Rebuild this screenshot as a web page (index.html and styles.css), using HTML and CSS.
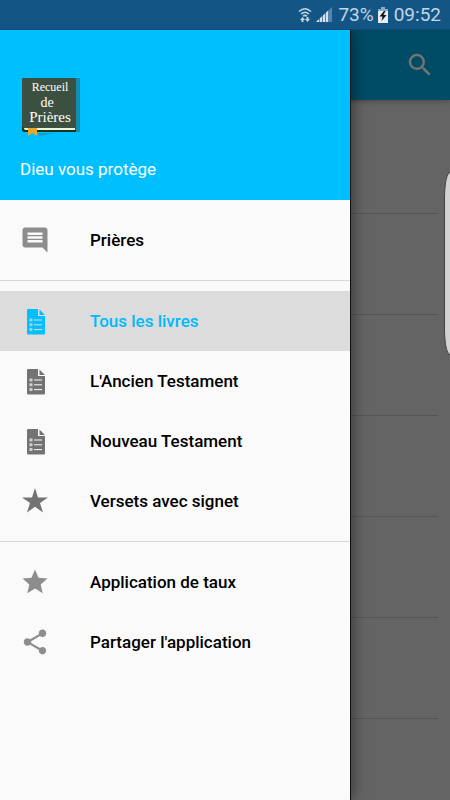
FILE: index.html
```html
<!DOCTYPE html>
<html lang="fr">
<head>
    <meta charset="UTF-8">
    <meta name="viewport" content="width=device-width, initial-scale=1.0">
    <title>Recueil de Prières</title>
    <link rel="stylesheet" href="styles.css">
</head>
<body>
    <div class="status-bar">
        <svg class="wifi" viewBox="0 0 14 18" width="14" height="18">
            <g fill="none" stroke="#c3d6e5" stroke-width="1.5">
                <path d="M1 5.5Q7 0 13 5.5"/>
                <path d="M3 8Q7 4.500 11 8"/>
                <path d="M5 10.300Q7 8.500 9 10.300"/>
            </g>
            <path d="M4.500 11L7 14H5.500V16H3.500V14H2ZM9.500 16L7 13H8.500V11H10.500V13H12Z" fill="#c3d6e5"/>
        </svg>
        <svg class="signal" viewBox="0 0 16 16" width="16" height="16">
            <path d="M0 15L16 0V15Z" fill="#5486ab"/>
            <path d="M0 15L3 12.200V15ZM4 15V11.200L6 9.300V15ZM7 15V8.400L9 6.500V15ZM10 15V5.600L12 3.700V15Z" fill="#d5e2ec"/>
        </svg>
        <span class="battery-level">73%</span>
        <svg class="battery" viewBox="0 0 10 16" width="10" height="16">
            <path d="M3 0H7V2H10V16H0V2H3Z" fill="#8aaac4"/>
            <path d="M0 4H10V16H0Z" fill="#e4edf3"/>
            <path d="M6 4L1.500 9.500H4.500L3.500 14L8.500 8H5.500L7.500 4Z" fill="#111"/>
        </svg>
        <span class="clock">09:52</span>
    </div>

    <div class="screen">
        <main class="page">
            <header class="app-bar">
                <button class="search-btn" type="button" aria-label="Rechercher">
                    <svg viewBox="0 0 24 24" width="30" height="30"><path d="M15.500 14h-.79l-.28-.27A6.471 6.471 0 0 0 16 9.500 6.500 6.500 0 1 0 9.500 16c1.610 0 3.090-.59 4.230-1.570l.27.28v.79l5 4.990L20.490 19l-4.990-5zm-6 0C7.010 14 5 11.990 5 9.500S7.010 5 9.500 5 14 7.010 14 9.500 11.990 14 9.500 14z"/></svg>
                </button>
            </header>
            <ul class="book-list">
                <li></li>
                <li></li>
                <li></li>
                <li></li>
                <li></li>
                <li></li>
            </ul>
        </main>

        <div class="edge-handle"></div>

        <aside class="drawer">
            <div class="drawer-header">
                <svg class="logo" viewBox="0 0 60 60" width="60" height="60">
                    <path d="M56 0H60V54H56Z" fill="#168cae"/>
                    <path d="M18 55H36L19 58Z" fill="#0d9fce"/>
                    <path d="M3 0H56V54H5Q2 54 2 51V1Q2 0 3 0Z" fill="#3b5040"/>
                    <path d="M2 49V51Q2 54 5 54H56V52H5Q3 52 3 49Z" fill="#17351d"/>
                    <path d="M4 50H55V52H5Q4 51 4 50Z" fill="#e9f5df"/>
                    <path d="M8 50H17V58L12.500 55L8 58Z" fill="#e9a72c"/>
                    <g fill="#fff" font-family="Liberation Serif, serif" text-anchor="middle">
                        <text x="30" y="13" font-size="12">Recueil</text>
                        <text x="27" y="29" font-size="14">de</text>
                        <text x="30" y="44" font-size="15">Prières</text>
                    </g>
                </svg>
                <p class="tagline">Dieu vous protège</p>
            </div>

            <nav class="menu">
                <div class="menu-group">
                    <a class="menu-item light" href="#">
                        <svg viewBox="0 0 24 24" width="30" height="30"><path d="M21.990 4c0-1.100-.89-2-1.990-2H4c-1.100 0-2 .9-2 2v12c0 1.100.9 2 2 2h14l4 4-.01-18zM18 14H6v-2h12v2zm0-3H6V9h12v2zm0-3H6V6h12v2z"/></svg>
                        Prières
                    </a>
                </div>
                <div class="menu-group">
                    <a class="menu-item active" href="#">
                        <svg viewBox="0 0 30 30" width="30" height="30"><use href="#doc"/></svg>
                        Tous les livres
                    </a>
                    <a class="menu-item" href="#">
                        <svg viewBox="0 0 30 30" width="30" height="30"><use href="#doc"/></svg>
                        L'Ancien Testament
                    </a>
                    <a class="menu-item" href="#">
                        <svg viewBox="0 0 30 30" width="30" height="30"><use href="#doc"/></svg>
                        Nouveau Testament
                    </a>
                    <a class="menu-item" href="#">
                        <svg viewBox="0 0 30 30" width="30" height="30"><path d="M15 2L18 11.500H28L20 17L23 26.500L15 20.700L7 26.500L10 17L2 11.500H12Z"/></svg>
                        Versets avec signet
                    </a>
                </div>
                <div class="menu-group">
                    <a class="menu-item light" href="#">
                        <svg viewBox="0 0 24 24" width="30" height="30"><path d="M12 17.270L18.180 21l-1.640-7.030L22 9.240l-7.190-.61L12 2 9.190 8.630 2 9.240l5.460 4.730L5.820 21z"/></svg>
                        Application de taux
                    </a>
                    <a class="menu-item light" href="#">
                        <svg viewBox="0 0 24 24" width="30" height="30"><path d="M18 16.080c-.76 0-1.440.3-1.960.77L8.910 12.700c.05-.23.09-.46.09-.7s-.04-.47-.09-.7l7.050-4.110c.54.5 1.250.81 2.040.81 1.660 0 3-1.340 3-3s-1.340-3-3-3-3 1.340-3 3c0 .24.04.47.09.7L8.040 9.810C7.500 9.310 6.790 9 6 9c-1.660 0-3 1.340-3 3s1.340 3 3 3c.79 0 1.500-.31 2.040-.81l7.120 4.160c-.05.21-.08.43-.08.65 0 1.610 1.310 2.920 2.920 2.920s2.920-1.310 2.920-2.920-1.310-2.920-2.920-2.920z"/></svg>
                        Partager l'application
                    </a>
                </div>
            </nav>
        </aside>
    </div>

    <!-- shared document icon -->
    <svg width="0" height="0" class="icon-defs">
        <defs>
            <g id="doc">
                <path d="M8 3H18V10H25V27Q25 28.500 24 28.500H8Q7 28.500 7 27V4Q7 3 8 3ZM19.500 3.500L25 9H19.500Z"/>
                <path d="M14 14H22M14 18.800H22M14 23.600H22" class="doc-line"/>
                <path d="M9.500 12.500H12.500V15.500H9.500ZM9.500 17.300H12.500V20.300H9.500ZM9.500 22.100H12.500V25.100H9.500Z" class="doc-box"/>
            </g>
        </defs>
    </svg>
</body>
</html>
```
FILE: styles.css
```css
* {
    box-sizing: border-box;
}
body {
    margin: 0;
    min-height: 100vh;
    display: flex;
    flex-direction: column;
    font-family: Roboto, sans-serif;
    background: #646464;
}

/* Status bar */
.status-bar {
    height: 30px;
    padding: 0 9px;
    display: flex;
    align-items: center;
    justify-content: flex-end;
    gap: 4px;
    background: #135686;
    border-bottom: 1px solid #0f4a76;
    color: #c3d6e5;
    font-size: 19px;
}
.clock {
    margin-left: 2px;
}
.signal {
    margin-right: 2px;
}

/* Page behind the drawer */
.screen {
    position: relative;
    flex: 1;
    overflow: hidden;
}
.app-bar {
    height: 70px;
    padding: 0 15px;
    display: flex;
    align-items: center;
    justify-content: flex-end;
    background: #004c66;
    box-shadow: 0 1px 5px rgba(0, 0, 0, 0.3);
}
.search-btn {
    padding: 0;
    border: none;
    background: none;
    display: flex;
    cursor: pointer;
}
.search-btn svg {
    fill: #737373;
}
.book-list {
    list-style: none;
    margin: 0;
    padding: 13px 12px 0 0;
}
.book-list li {
    height: 101px;
    border-bottom: 1px solid #555;
}
.edge-handle {
    position: absolute;
    top: 142px;
    right: 0;
    width: 6px;
    height: 183px;
    background: #d2d2d2;
    border: 1px solid #444;
    border-right: none;
    border-radius: 6px 0 0 6px / 26px 0 0 26px;
}

/* Drawer */
.drawer {
    position: absolute;
    top: 0;
    bottom: 0;
    left: 0;
    width: calc(100% - 100px);
    max-width: 400px;
    background: #fafafa;
    box-shadow: 1px 0 0 #111, 2px 0 14px rgba(0, 0, 0, 0.5);
}
.drawer-header {
    height: 170px;
    padding: 48px 20px 20px;
    display: flex;
    flex-direction: column;
    justify-content: space-between;
    background: #00bfff;
}
.tagline {
    margin: 0;
    color: #fff;
    font-size: 17px;
    line-height: 22px;
}
.menu-group {
    padding: 10px 0;
}
.menu-group + .menu-group {
    border-top: 1px solid #d8d8d8;
}
.menu-item {
    height: 60px;
    padding: 0 20px;
    display: flex;
    align-items: center;
    gap: 40px;
    color: #000;
    font-size: 17px;
    font-weight: 500;
    text-decoration: none;
}
.menu-item svg {
    fill: #737373;
    color: #fafafa;
}
.menu-item.light svg {
    fill: #8d8d8d;
}
.menu-item.active {
    background: #dcdcdc;
    color: #00b9fb;
}
.menu-item.active svg {
    fill: #00bfff;
    color: #dcdcdc;
}
.doc-line {
    fill: none;
    stroke: currentColor;
    stroke-width: 1;
}
.doc-box {
    fill: currentColor;
    opacity: 0.7;
}
.icon-defs {
    position: absolute;
}
```
